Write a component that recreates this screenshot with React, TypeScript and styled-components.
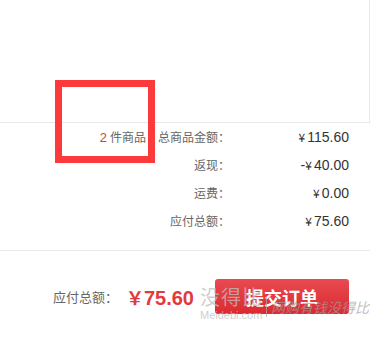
import React from "react";
import styled, { createGlobalStyle } from "styled-components";

const GlobalStyle = createGlobalStyle`
  body {
    margin: 0;
    background: #fff;
    font-family: "Noto Sans CJK SC", "Liberation Sans", sans-serif;
  }
`;

const Page = styled.div`
  position: relative;
  width: 386px;
  height: 339px;
  overflow: hidden;
`;

const GoodsBox = styled.div`
  width: 369px;
  height: 122px;
  border-right: 1px solid #e8e8e8;
  border-bottom: 1px solid #e8e8e8;
`;

const Summary = styled.div`
  width: 370px;
  padding-bottom: 15px;
  border-bottom: 1px solid #e8e8e8;
`;

const Row = styled.div`
  display: grid;
  grid-template-columns: 146px 84px 119px;
  height: 28px;
  line-height: 28px;
  font-size: 12px;
`;

const Count = styled.div`
  text-align: right;
  color: #666;
  span {
    color: #e4393c;
    font-family: "Liberation Sans", sans-serif;
    font-size: 13px;
    margin-right: 3px;
  }
`;

const Label = styled.div`
  text-align: right;
  color: #666;
`;

const Value = styled.div`
  text-align: right;
  color: #333;
  font-family: "Liberation Sans", sans-serif;
  font-size: 14px;
`;

const Yen = styled.span`
  font-family: "Noto Sans CJK SC", sans-serif;
  font-size: 12px;
  margin-right: 2px;
`;

const Footer = styled.div`
  position: relative;
  width: 370px;
  display: flex;
  align-items: center;
  justify-content: flex-end;
  padding: 28px 21px 0 0;
  box-sizing: border-box;
`;

const TotalLabel = styled.span`
  color: #666;
  font-size: 13px;
`;

const TotalPrice = styled.span`
  color: #e4393c;
  font-family: "Liberation Sans", sans-serif;
  font-weight: bold;
  font-size: 20px;
  margin-left: 8px;
  small {
    font-family: "Noto Sans CJK SC", serif;
    font-size: 18px;
    font-weight: bold;
  }
`;

const SubmitButton = styled.button`
  width: 134px;
  height: 35px;
  margin-left: 21px;
  border: 0;
  border-radius: 3px;
  background: linear-gradient(#e94a51, #db2a31);
  color: #fff;
  font-family: "Noto Sans CJK SC", sans-serif;
  font-weight: bold;
  font-size: 18px;
  padding: 0;
`;

const Mark = styled.div`
  position: absolute;
  left: 55px;
  top: 80px;
  width: 100px;
  height: 83px;
  box-sizing: border-box;
  border: 7px solid #fc3a3c;
`;

const Watermark = styled.div`
  position: absolute;
  left: 200px;
  top: 285px;
  pointer-events: none;
  color: rgba(190, 190, 190, 0.75);
`;

const WmLogo = styled.div`
  font-size: 20px;
  line-height: 24px;
  letter-spacing: 1px;
`;

const WmSite = styled.div`
  font-family: "Liberation Sans", sans-serif;
  font-size: 11px;
  line-height: 12px;
`;

const WmSlogan = styled.div`
  position: absolute;
  left: 66px;
  top: 12px;
  white-space: nowrap;
  font-size: 14px;
  font-style: italic;
  color: rgba(160, 160, 160, 0.7);
  border-left: 1px solid rgba(170, 170, 170, 0.7);
  padding-left: 4px;
  line-height: 20px;
`;

const rows = [
  { label: "总商品金额：", value: "115.60", sign: "" },
  { label: "返现：", value: "40.00", sign: "-" },
  { label: "运费：", value: "0.00", sign: "" },
  { label: "应付总额：", value: "75.60", sign: "" },
];

export default function App() {
  return (
    <Page>
      <GlobalStyle />
      <GoodsBox />
      <Summary>
        {rows.map((r, i) => (
          <Row key={r.label}>
            <Count>
              {i === 0 && (
                <>
                  <span>2</span>件商品
                </>
              )}
            </Count>
            <Label>{r.label}</Label>
            <Value>
              {r.sign}
              <Yen>¥</Yen>
              {r.value}
            </Value>
          </Row>
        ))}
      </Summary>
      <Footer>
        <TotalLabel>应付总额：</TotalLabel>
        <TotalPrice>
          <small>￥</small>75.60
        </TotalPrice>
        <SubmitButton>提交订单</SubmitButton>
      </Footer>
      <Mark />
      <Watermark>
        <WmLogo>没得比</WmLogo>
        <WmSite>Meidebi.com</WmSite>
        <WmSlogan>网购有钱没得比</WmSlogan>
      </Watermark>
    </Page>
  );
}
